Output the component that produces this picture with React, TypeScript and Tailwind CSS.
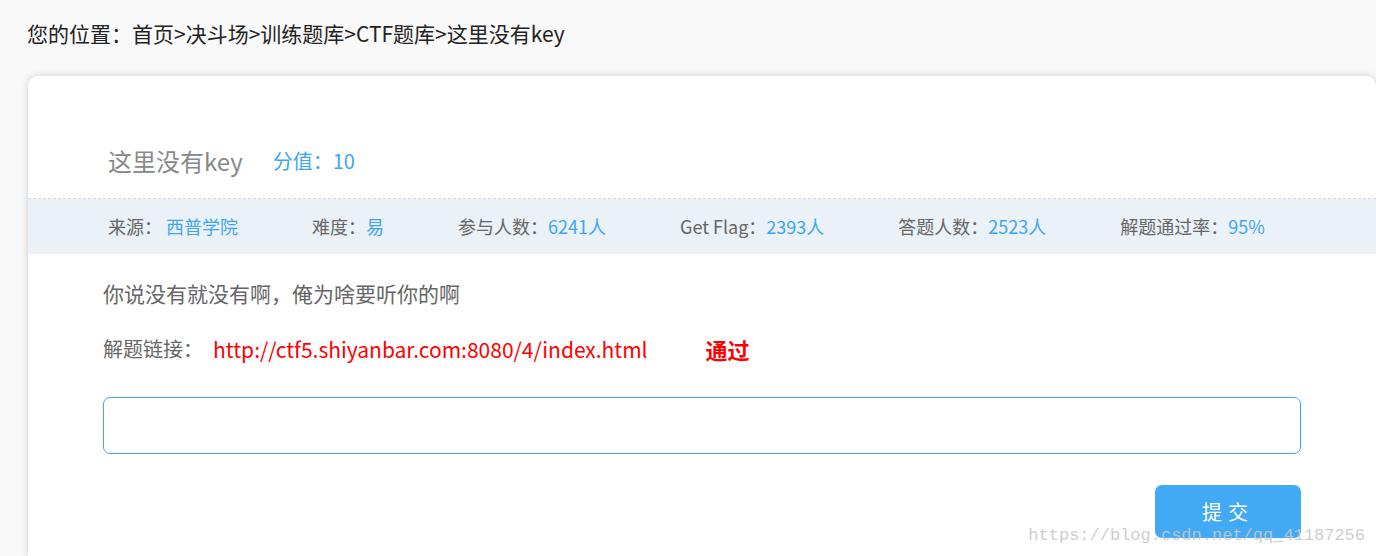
import React from "react";

const cjk = { fontFamily: '"Noto Sans CJK SC", "Noto Sans", sans-serif' };

const stats = [
  { label: "来源：", value: "西普学院", space: true },
  { label: "难度：", value: "易" },
  { label: "参与人数：", value: "6241人" },
  { label: "Get Flag：", value: "2393人" },
  { label: "答题人数：", value: "2523人" },
  { label: "解题通过率：", value: "95%" },
];

const App = () => {
  return (
    <div
      className="relative w-[1376px] h-[556px] overflow-hidden bg-[#f9f9f9] flex flex-col"
      style={cjk}
    >
      {/* breadcrumb */}
      <div className="pl-[27px] pt-[18px] h-[76px] text-[21px] leading-[30px] text-[#222]">
        您的位置：首页&gt;决斗场&gt;训练题库&gt;CTF题库&gt;这里没有key
      </div>

      <div className="ml-[28px] flex-1 bg-white rounded-t-[10px] shadow-[0_0_8px_rgba(0,0,0,0.18)] flex flex-col">
        {/* title */}
        <div className="flex items-center gap-[30px] pl-[80px] pt-[69px] pb-[22px] h-[123px] border-b border-dashed border-[#cfd6dd]">
          <span className="text-[24px] leading-[32px] text-[#888]">这里没有key</span>
          <span className="text-[20px] leading-[32px] text-[#3ea6f0]">分值：10</span>
        </div>

        {/* stats band */}
        <div className="flex items-center gap-[74px] pl-[80px] h-[55px] bg-[#eaf1f7] text-[18px] text-[#666]">
          {stats.map((s) => (
            <span key={s.label}>
              {s.label}
              {s.space ? " " : ""}
              <span className="text-[#3ea6f0]">{s.value}</span>
            </span>
          ))}
        </div>

        <div className="px-[75px] flex flex-col">
          <p className="mt-[25px] text-[21px] leading-[28px] text-[#666]">
            你说没有就没有啊，俺为啥要听你的啊
          </p>

          <div className="mt-[28px] flex items-center text-[20px] leading-[28px]">
            <span className="text-[#666]">解题链接：</span>
            <a className="ml-[10px] text-[21px] text-[#ff0000]" href="#">
              http://ctf5.shiyanbar.com:8080/4/index.html
            </a>
            <span className="ml-[58px] text-[22px] font-bold text-[#ff0000]">通过</span>
          </div>

          <input
            className="mt-[34px] h-[57px] w-full rounded-[7px] border-[1.5px] border-[#42a5f5] outline-none px-3"
            type="text"
          />

          <div className="mt-[31px] flex justify-end">
            <button className="w-[146px] h-[53px] rounded-[7px] bg-[#42aaf5] text-white text-[20px] tracking-[6px]">
              提交
            </button>
          </div>
        </div>
      </div>

      {/* watermark */}
      <div
        className="absolute right-[11px] top-[523px] text-[17px] leading-[26px] text-[#c8c8c8]/90"
        style={{ fontFamily: '"Liberation Mono", "DejaVu Sans Mono", monospace' }}
      >
        https://blog.csdn.net/qq_41187256
      </div>
    </div>
  );
};

export default App;
